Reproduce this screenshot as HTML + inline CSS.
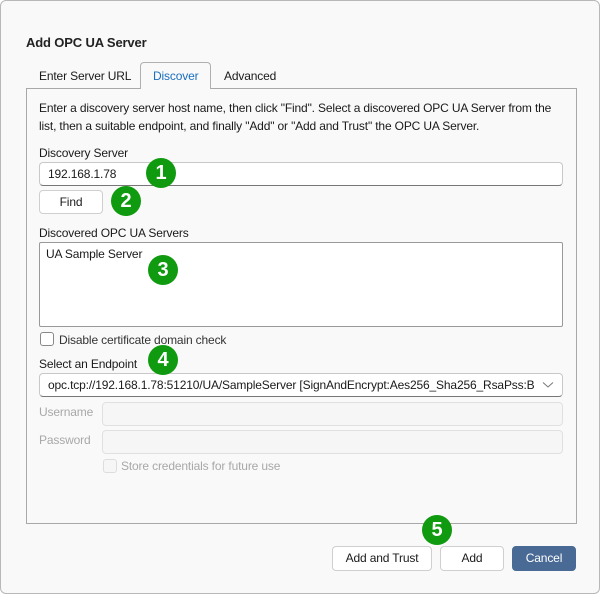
<!DOCTYPE html>
<html><head><style>
*{box-sizing:border-box;margin:0;padding:0}
body{width:602px;height:596px;background:#fff;font-family:"Liberation Sans",sans-serif;font-size:12px;letter-spacing:-0.15px;color:#1a1a1a;position:relative;overflow:hidden}
.win{position:absolute;left:0;top:0;width:600px;height:594px;background:#f9f9f9;border:1px solid #b8b8b8;border-radius:6px}
.a{position:absolute;white-space:nowrap}
.box{position:absolute;background:#fff;border:1px solid #c8c8c8;border-radius:4px}
.in{border-bottom:1px solid #777}
.btn{position:absolute;background:#fff;border:1px solid #cfcfcf;border-radius:4px;text-align:center;line-height:22px}
.b{position:absolute;width:30px;height:30px;border-radius:50%;background:#0f9a0f;color:#fff;font-size:20px;font-weight:bold;line-height:30px;text-align:center}
.dis{color:#a8a8a8}
.dbox{position:absolute;background:#f6f6f6;border:1px solid #e0e0e0;border-radius:4px}
</style></head><body>
<div class="win"></div>
<div class="a" style="left:26px;top:35px;font-size:13px;font-weight:bold;color:#222">Add OPC UA Server</div>
<div class="a" style="left:39px;top:69px">Enter Server URL</div>
<div class="a" style="left:140px;top:62px;width:71px;height:27px;background:#f9f9f9;border:1px solid #b0b0b0;border-bottom:none;border-radius:4px 4px 0 0;z-index:2"></div>
<div class="a" style="left:153px;top:69px;color:#1a6fbf;z-index:3">Discover</div>
<div class="a" style="left:224px;top:69px">Advanced</div>
<div class="a" style="left:26px;top:88px;width:551px;height:436px;border:1px solid #a8a8a8"></div>
<div class="a" style="left:39px;top:101px">Enter a discovery server host name, then click "Find". Select a discovered OPC UA Server from the</div>
<div class="a" style="left:39px;top:119px">list, then a suitable endpoint, and finally "Add" or "Add and Trust" the OPC UA Server.</div>
<div class="a" style="left:39px;top:146px">Discovery Server</div>
<div class="box in" style="left:39px;top:162px;width:524px;height:24px"></div>
<div class="a" style="left:48px;top:167px">192.168.1.78</div>
<div class="btn" style="left:39px;top:190px;width:64px;height:24px">Find</div>
<div class="a" style="left:39px;top:226px">Discovered OPC UA Servers</div>
<div class="box" style="left:39px;top:242px;width:524px;height:85px;border-color:#999;border-radius:2px"></div>
<div class="a" style="left:46px;top:247px">UA Sample Server</div>
<div class="a" style="left:40px;top:332px;width:14px;height:14px;border:1px solid #888;border-radius:3px;background:#fff"></div>
<div class="a" style="left:59px;top:333px;color:#333">Disable certificate domain check</div>
<div class="a" style="left:39px;top:357px">Select an Endpoint</div>
<div class="box in" style="left:39px;top:373px;width:524px;height:24px"></div>
<div class="a" style="left:48px;top:378px;width:486px;overflow:hidden">opc.tcp://192.168.1.78:51210/UA/SampleServer [SignAndEncrypt:Aes256_Sha256_RsaPss:Binary]</div>
<svg class="a" style="left:542px;top:381px" width="12" height="8"><path d="M1 1.5 L6 6 L11 1.5" stroke="#777" fill="none"/></svg>
<div class="a dis" style="left:39px;top:405px">Username</div>
<div class="dbox" style="left:102px;top:402px;width:461px;height:24px"></div>
<div class="a dis" style="left:39px;top:433px">Password</div>
<div class="dbox" style="left:102px;top:430px;width:461px;height:24px"></div>
<div class="a" style="left:103px;top:459px;width:14px;height:14px;border:1px solid #ddd;border-radius:3px;background:#f6f6f6"></div>
<div class="a dis" style="left:121px;top:459px">Store credentials for future use</div>
<div class="btn" style="left:332px;top:546px;width:100px;height:25px">Add and Trust</div>
<div class="btn" style="left:440px;top:546px;width:64px;height:25px">Add</div>
<div class="btn" style="left:512px;top:546px;width:64px;height:25px;background:#4a6a96;border-color:#4a6a96;color:#fff">Cancel</div>
<div class="b" style="left:146px;top:158px">1</div>
<div class="b" style="left:111px;top:186px">2</div>
<div class="b" style="left:148px;top:255px">3</div>
<div class="b" style="left:148px;top:345px">4</div>
<div class="b" style="left:422px;top:515px">5</div>
</body></html>
